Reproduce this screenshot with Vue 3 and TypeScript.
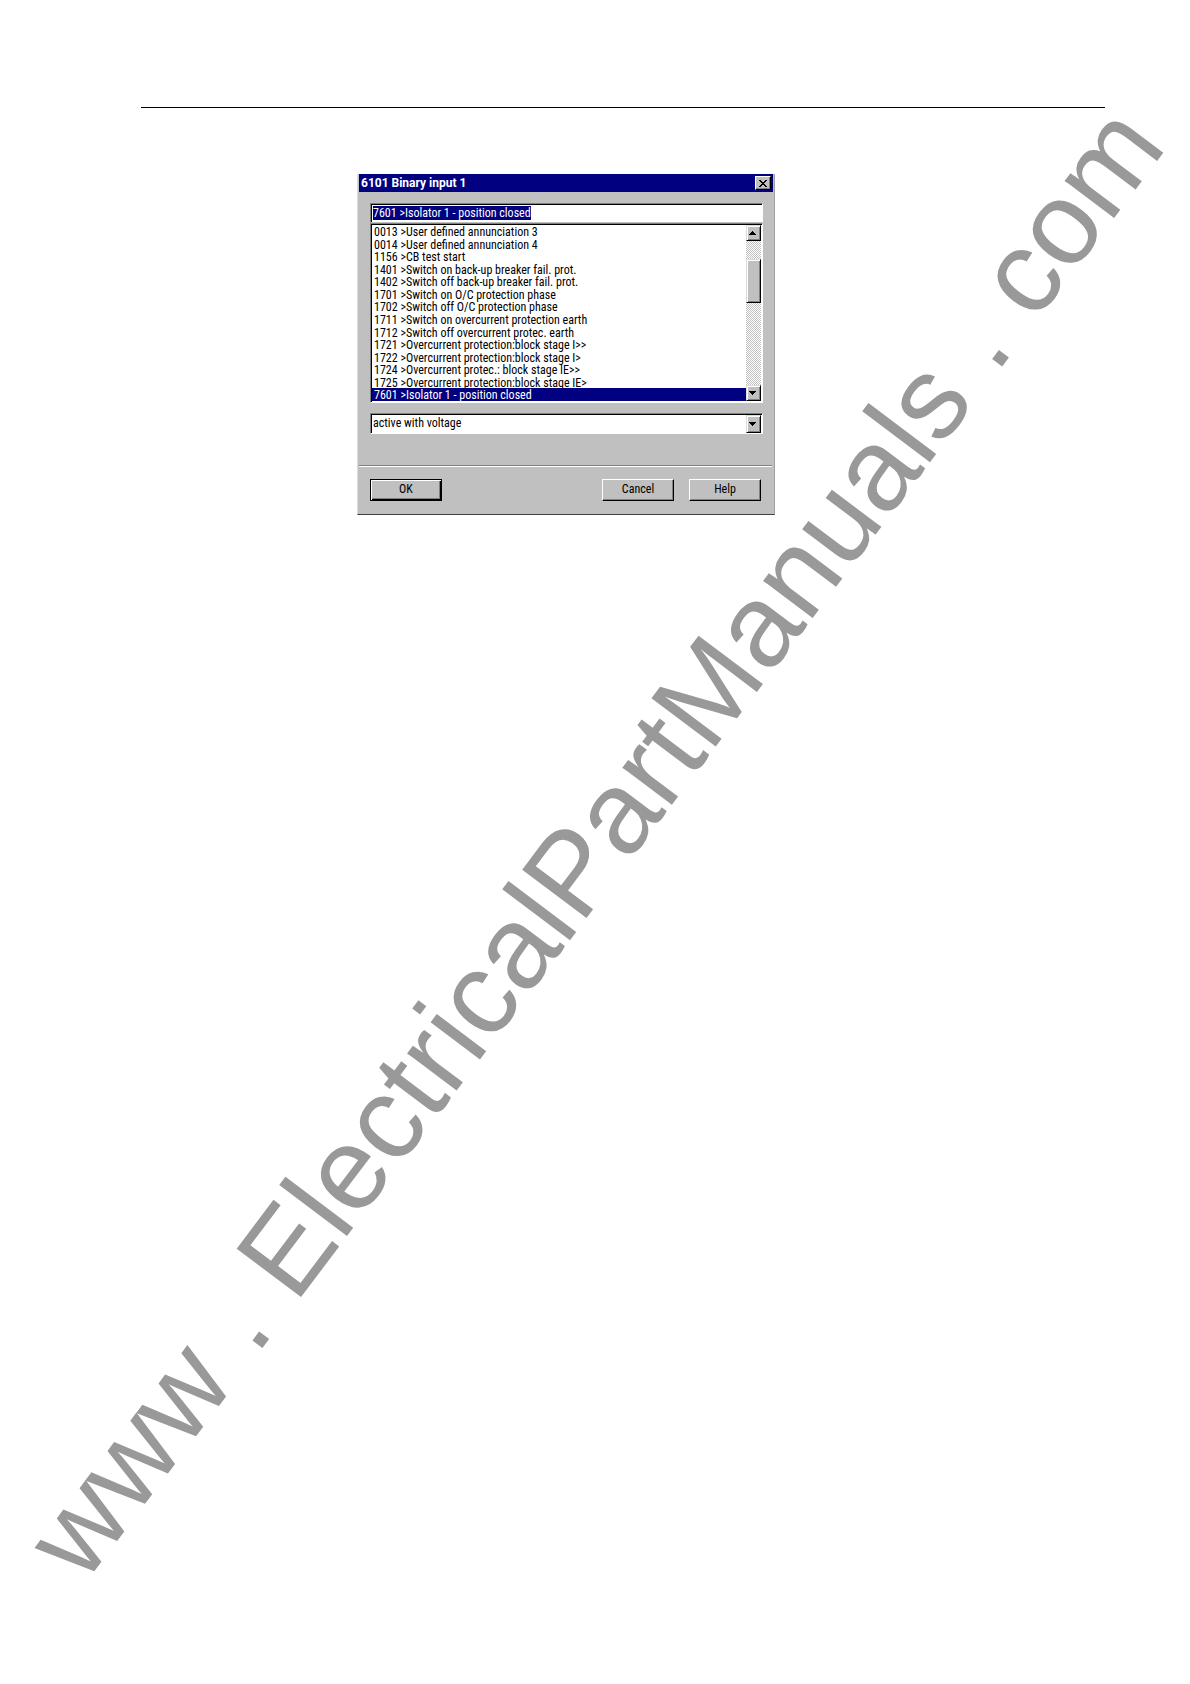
<script setup lang="ts">
import { onMounted, ref } from 'vue'

interface Annunciation {
  id: string
  label: string
}

const annunciations: Annunciation[] = [
  { id: '0013', label: 'User defined annunciation 3' },
  { id: '0014', label: 'User defined annunciation 4' },
  { id: '1156', label: 'CB test start' },
  { id: '1401', label: 'Switch on back-up breaker fail. prot.' },
  { id: '1402', label: 'Switch off back-up breaker fail. prot.' },
  { id: '1701', label: 'Switch on O/C protection phase' },
  { id: '1702', label: 'Switch off O/C protection phase' },
  { id: '1711', label: 'Switch on overcurrent protection earth' },
  { id: '1712', label: 'Switch off overcurrent protec. earth' },
  { id: '1721', label: 'Overcurrent protection:block stage I>>' },
  { id: '1722', label: 'Overcurrent protection:block stage I>' },
  { id: '1724', label: 'Overcurrent protec.: block stage IE>>' },
  { id: '1725', label: 'Overcurrent protection:block stage IE>' },
  { id: '7601', label: 'Isolator 1 - position closed' },
]

const format = (a: Annunciation): string => `${a.id} >${a.label}`

const selectedId = ref('7601')
const entry = ref('7601 >Isolator 1 - position closed')
const mode = ref('active with voltage')
const entryField = ref<HTMLInputElement | null>(null)

function choose(a: Annunciation): void {
  selectedId.value = a.id
  entry.value = format(a)
}

onMounted(() => {
  entryField.value?.focus()
  entryField.value?.select()
})
</script>

<template>
  <main class="page">
    <hr class="page-rule" />

    <section class="dialog" role="dialog" aria-labelledby="dialog-title">
      <header class="title-bar">
        <h1 id="dialog-title" class="title">6101 Binary input 1</h1>
        <button class="close" type="button" aria-label="Close">
          <svg width="8" height="7" viewBox="0 0 8 7" shape-rendering="crispEdges" aria-hidden="true">
            <path d="M0 0h2v1h1v1h2v-1h1v-1h2v1h-1v1h-1v1h-1v1h1v1h1v1h1v1h-2v-1h-1v-1h-2v1h-1v1h-2v-1h1v-1h1v-1h1v-1h-1v-1h-1v-1h-1z" />
          </svg>
        </button>
      </header>

      <div class="fields">
        <input ref="entryField" v-model="entry" class="entry" type="text" aria-label="Annunciation" spellcheck="false" />

        <div class="list-box">
          <ul class="list" role="listbox" aria-label="Annunciations">
            <li
              v-for="a in annunciations"
              :key="a.id"
              class="item"
              :class="{ selected: a.id === selectedId }"
              role="option"
              :aria-selected="a.id === selectedId"
              @click="choose(a)"
            >{{ format(a) }}</li>
          </ul>
          <div class="scrollbar">
            <button class="arrow" type="button" aria-label="Scroll up">
              <svg width="7" height="4" viewBox="0 0 7 4" shape-rendering="crispEdges" aria-hidden="true"><path d="M3 0h1v1h1v1h1v1h1v1h-7v-1h1v-1h1v-1h1z" /></svg>
            </button>
            <div class="track"><div class="thumb"></div></div>
            <button class="arrow" type="button" aria-label="Scroll down">
              <svg width="7" height="4" viewBox="0 0 7 4" shape-rendering="crispEdges" aria-hidden="true"><path d="M0 0h7v1h-1v1h-1v1h-1v1h-1v-1h-1v-1h-1v-1h-1z" /></svg>
            </button>
          </div>
        </div>

        <div class="combo">
          <select v-model="mode" class="combo-select" aria-label="Activation">
            <option>active with voltage</option>
            <option>active without voltage</option>
          </select>
          <span class="arrow" aria-hidden="true">
            <svg width="7" height="4" viewBox="0 0 7 4" shape-rendering="crispEdges"><path d="M0 0h7v1h-1v1h-1v1h-1v1h-1v-1h-1v-1h-1v-1h-1z" /></svg>
          </span>
        </div>
      </div>

      <hr class="divider" />

      <footer class="actions">
        <button class="action default" type="button">OK</button>
        <span class="spring"></span>
        <button class="action" type="button">Cancel</button>
        <button class="action" type="button">Help</button>
      </footer>
    </section>

    <svg class="watermark" viewBox="0 0 1190 1684" aria-hidden="true">
      <text transform="translate(84 1585) rotate(-53)">www . ElectricalPartManuals . com</text>
    </svg>
  </main>
</template>

<style>
body {
  margin: 0;
  background: #fff;
}
</style>

<style scoped>
.page {
  position: relative;
  box-sizing: border-box;
  min-height: 100vh;
  padding: 107px 85px 40px 141px;
  overflow: hidden;
  background: #fff;
  color: #000;
  font: 12px/15px "Roboto Condensed", "Liberation Sans Narrow", "Liberation Sans", sans-serif;
}

.page-rule {
  height: 1px;
  margin: 0;
  border: 0;
  background: #000;
}

.dialog {
  box-sizing: border-box;
  width: 100%;
  max-width: 418px;
  margin: 66px 0 0 216px;
  border: solid;
  border-width: 0 1px 1px;
  border-color: #c0c0c0 #a0a0a0 #404040 #dcdcdc;
  background: #c0c0c0;
}

.title-bar {
  display: flex;
  align-items: center;
  justify-content: space-between;
  height: 18px;
  margin: 0 1px;
  padding: 0 2px;
  background: #000080;
  color: #fff;
}

.title {
  margin: 0;
  font-family: Roboto, "Liberation Sans", sans-serif;
  font-size: 12px;
  line-height: 16px;
  font-weight: 700;
}

button {
  display: flex;
  align-items: center;
  justify-content: center;
  box-sizing: border-box;
  margin: 0;
  padding: 0;
  background: #c0c0c0;
  color: #000;
  font: inherit;
}

.close {
  width: 16px;
  height: 14px;
  border: 1px solid;
  border-color: #fff #000 #000 #fff;
  box-shadow: inset -1px -1px #808080;
}

.fields {
  display: flex;
  flex-direction: column;
  padding: 11px 11px 0 12px;
}

.entry,
.list-box,
.combo {
  box-sizing: border-box;
  border: 1px solid;
  border-color: #808080 #fff #fff #808080;
  box-shadow: inset 1px 1px #000;
  background: #fff;
}

.entry {
  width: 100%;
  height: 20px;
  margin: 0;
  padding: 0 2px;
  border-bottom-color: #c0c0c0;
  border-radius: 0;
  outline: 0;
  color: #000;
  font: inherit;
  line-height: 14px;
}

.entry::selection {
  background: #000080;
  color: #fff;
}

.list-box {
  display: flex;
  padding: 1px;
}

.list {
  display: grid;
  flex: 1;
  grid-auto-rows: minmax(0, 1fr);
  height: 176px;
  margin: 0;
  padding: 0;
  list-style: none;
}

.item {
  padding-left: 2px;
  white-space: pre;
}

.item.selected {
  background: #000080;
  color: #fff;
}

.scrollbar {
  display: flex;
  flex-direction: column;
  width: 15px;
}

.arrow {
  display: flex;
  flex: none;
  align-items: center;
  justify-content: center;
  box-sizing: border-box;
  width: 15px;
  height: 16px;
  padding-right: 2px;
  border: 1px solid;
  border-color: #dcdcdc #000 #000 #dcdcdc;
  box-shadow: inset 1px 1px #fff, inset -1px -1px #808080;
  background: #c0c0c0;
}

.track {
  flex: 1;
  padding-top: 18px;
  background: repeating-conic-gradient(#c0c0c0 0 25%, #fff 0 50%) 0 0 / 2px 2px;
}

.thumb {
  box-sizing: border-box;
  height: 44px;
  border: 1px solid;
  border-color: #dcdcdc #000 #000 #dcdcdc;
  box-shadow: inset 1px 1px #fff, inset -1px -1px #808080;
  background: #c0c0c0;
}

.combo {
  display: flex;
  align-items: center;
  height: 21px;
  margin-top: 10px;
  padding: 1px 1px 0;
}

.combo-select {
  flex: 1;
  align-self: stretch;
  margin: 0;
  padding: 0 0 2px 1px;
  border: 0;
  border-radius: 0;
  outline: 0;
  appearance: none;
  background: transparent;
  color: #000;
  font: inherit;
}

.combo .arrow {
  height: 18px;
  pointer-events: none;
}

.divider {
  height: 1px;
  margin: 31px 2px 0 1px;
  border: 0;
  border-bottom: 1px solid #fff;
  background: #808080;
}

.actions {
  display: flex;
  gap: 15px;
  padding: 12px 13px 13px 12px;
}

.spring {
  flex: 1;
}

.action {
  width: 72px;
  height: 22px;
  padding-bottom: 2px;
  border: 1px solid;
  border-color: #fff #000 #000 #fff;
  box-shadow: inset -1px -1px #808080;
}

.action.default {
  border-color: #000;
  box-shadow: inset 1px 1px #fff, inset -1px -1px #000, inset -2px -2px #808080;
}

.watermark {
  position: absolute;
  top: 0;
  left: 0;
  width: 100%;
  pointer-events: none;
}

.watermark text {
  fill: #999;
  font-family: "Liberation Sans", Arial, sans-serif;
  font-size: 117px;
  font-kerning: none;
}
</style>
